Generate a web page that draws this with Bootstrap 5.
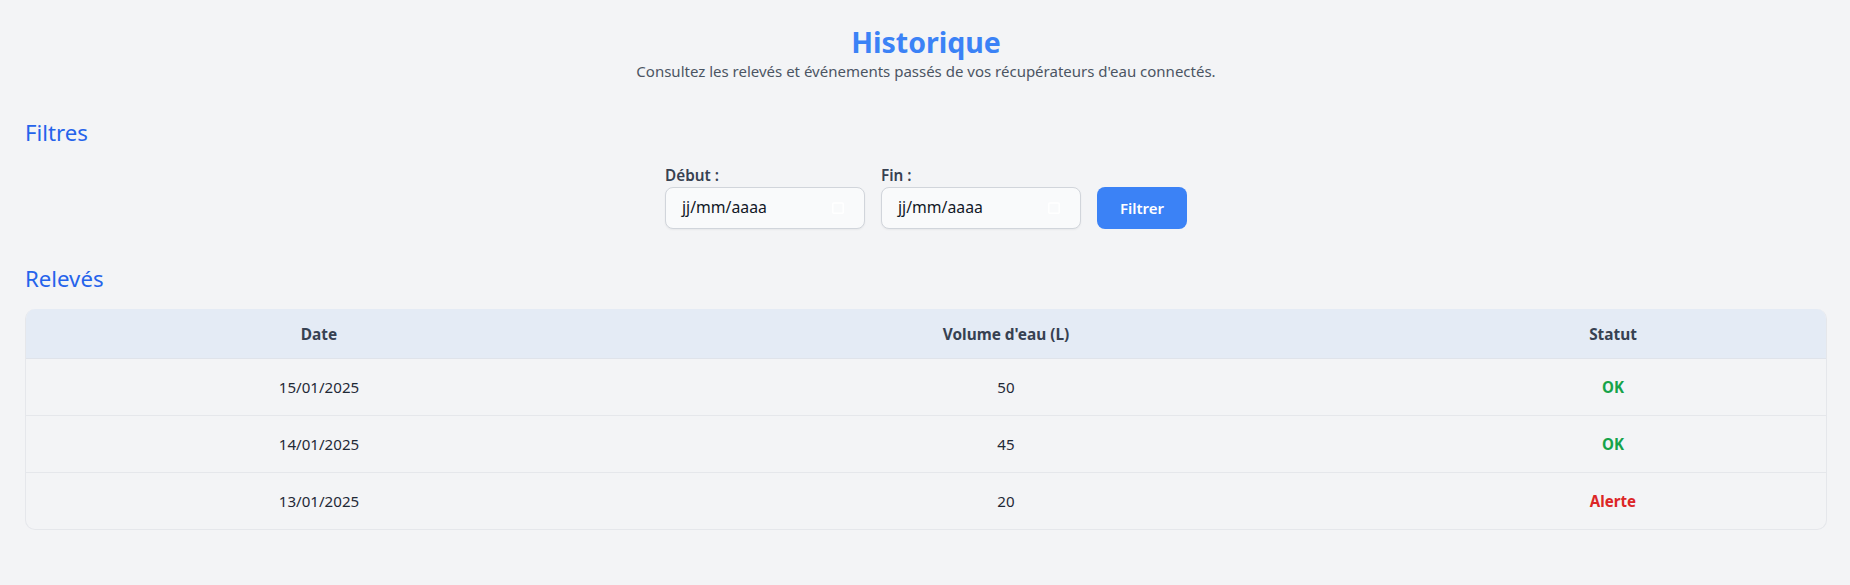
<!DOCTYPE html>
<html lang="fr">
<head>
<meta charset="utf-8">
<title>Historique</title>
<link href="https://cdn.jsdelivr.net/npm/bootstrap@5.3.0/dist/css/bootstrap.min.css" rel="stylesheet">
<style>
body{background:#f3f4f6;font-family:"Noto Sans","Open Sans","Liberation Sans",sans-serif;color:#374151;font-size:15px;height:585px;overflow:hidden}
.page-wrap{padding:23px 23px 0 25px}
.page-title{font-size:28.5px;font-weight:700;color:#3b82f6;line-height:38px;margin:0}
.page-sub{font-size:15px;color:#4b5563;line-height:21px;margin:0}
.filter-sect{margin-top:35px}
.rel-sect{margin-top:34px}
.sect-title{font-size:22.2px;font-weight:400;color:#2563eb;line-height:32px;margin:0}
.rel-title{margin-bottom:14px}
.filters{margin-top:15px;gap:16px}
.filters label{display:block;font-weight:600;font-size:15.3px;line-height:22px;margin-bottom:1px;color:#374151}
.date-box{width:200px;height:42px;background:#f9fafb;border:1px solid #d1d5db;border-radius:8px;padding:0 20px 0 16px;color:#111827;font-size:15.8px;box-shadow:0 1px 2px rgba(0,0,0,.05)}
.date-ico{display:block;width:12px;height:12px}
.go-btn{width:90px;height:42px;background:#3b82f6;border:0;border-radius:8px;color:#fff;font-weight:600;font-size:15px;padding:0}
.go-btn:hover{background:#3b82f6;color:#fff}
.table-shell{border:1px solid #e5e7eb;border-top:0;border-radius:10px;overflow:hidden}
.data-table{--bs-table-bg:transparent;table-layout:fixed;margin:0;color:#1f2937;font-size:15.1px}
.data-table th{background:#e4ebf5;color:#374151;font-weight:700;font-size:15.4px;height:49px;padding:2px 0 0;vertical-align:middle;text-align:center;border-bottom:1px solid #dfe3ea}
.data-table td{height:57px;padding:2px 0 0;vertical-align:middle;text-align:center;border-bottom:1px solid #e5e7eb;color:#1f2937}
.data-table tr:last-child td{border-bottom:0}
.c1{width:586px}.c2{width:788px}
.data-table td.st-ok{color:#16a34a;font-weight:700}
.data-table td.st-bad{color:#dc2626;font-weight:700}
</style>
</head>
<body>
<div class="page-wrap">
  <header class="text-center">
    <h1 class="page-title">Historique</h1>
    <p class="page-sub">Consultez les relevés et événements passés de vos récupérateurs d'eau connectés.</p>
  </header>
  <section class="filter-sect">
    <h2 class="sect-title">Filtres</h2>
    <form class="filters d-flex justify-content-center align-items-end">
      <div><label>Début :</label><div class="date-box d-flex align-items-center justify-content-between"><span>jj/mm/aaaa</span><svg class="date-ico" viewBox="0 0 12 12"><rect x=".75" y="1" width="10.5" height="10.25" rx="1" fill="none" stroke="#fff" stroke-width="1.5"/></svg></div></div>
      <div><label>Fin :</label><div class="date-box d-flex align-items-center justify-content-between"><span>jj/mm/aaaa</span><svg class="date-ico" viewBox="0 0 12 12"><rect x=".75" y="1" width="10.5" height="10.25" rx="1" fill="none" stroke="#fff" stroke-width="1.5"/></svg></div></div>
      <button type="button" class="btn go-btn">Filtrer</button>
    </form>
  </section>
  <section class="rel-sect">
    <h2 class="sect-title rel-title">Relevés</h2>
    <div class="table-shell">
      <table class="table data-table">
        <colgroup><col class="c1"><col class="c2"><col></colgroup>
        <thead><tr><th>Date</th><th>Volume d'eau (L)</th><th>Statut</th></tr></thead>
        <tbody>
          <tr><td>15/01/2025</td><td>50</td><td class="st-ok">OK</td></tr>
          <tr><td>14/01/2025</td><td>45</td><td class="st-ok">OK</td></tr>
          <tr><td>13/01/2025</td><td>20</td><td class="st-bad">Alerte</td></tr>
        </tbody>
      </table>
    </div>
  </section>
</div>
<script src="https://cdn.jsdelivr.net/npm/bootstrap@5.3.0/dist/js/bootstrap.bundle.min.js"></script>
</body>
</html>
